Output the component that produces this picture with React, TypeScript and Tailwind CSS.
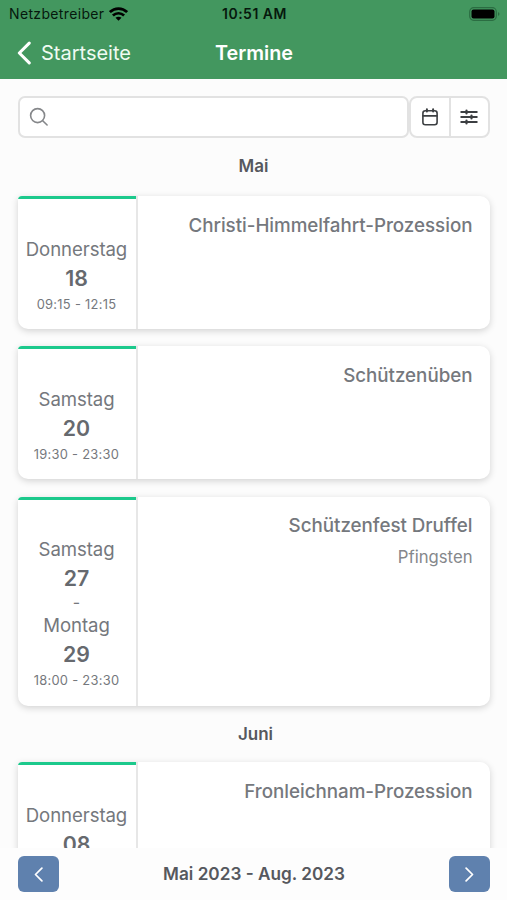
import React from 'react';

type Day = { name: string; date: string };
type Appointment = { days: Day[]; time: string; title: string; note?: string; height: string };

const mai: Appointment[] = [
  { days: [{ name: 'Donnerstag', date: '18' }], time: '09:15 - 12:15', title: 'Christi-Himmelfahrt-Prozession', height: 'h-[133px]' },
  { days: [{ name: 'Samstag', date: '20' }], time: '19:30 - 23:30', title: 'Schützenüben', height: 'h-[133px]' },
  {
    days: [
      { name: 'Samstag', date: '27' },
      { name: 'Montag', date: '29' },
    ],
    time: '18:00 - 23:30',
    title: 'Schützenfest Druffel',
    note: 'Pfingsten',
    height: 'h-[209px]',
  },
];

const juni: Appointment[] = [
  { days: [{ name: 'Donnerstag', date: '08' }], time: '09:15 - 12:15', title: 'Fronleichnam-Prozession', height: 'h-[133px]' },
];

function AppointmentCard({ item }: { item: Appointment }) {
  return (
    <article className={`flex shrink-0 overflow-hidden rounded-[10px] rounded-tl-[4px] bg-white shadow-[0_2px_7px_rgba(0,0,0,0.17)] ${item.height}`}>
      <div className="flex w-[118px] shrink-0 flex-col items-center border-t-[3px] border-[#1cc98c] pt-[36.8px] whitespace-nowrap text-[#75787d]">
        {item.days.map((day, i) => (
          <React.Fragment key={day.date}>
            {i > 0 && <span className="h-[20px] text-[16px] leading-[21px]">-</span>}
            <span className="h-[26px] text-[18.6px] leading-[26px] tracking-[-0.08px]">{day.name}</span>
            <span className="h-[30px] text-[21.3px] leading-[32px] font-semibold text-[#66696e]">{day.date}</span>
          </React.Fragment>
        ))}
        <span className="h-[22px] text-[12.9px] leading-[26px] tracking-[0.28px]">{item.time}</span>
      </div>
      <div className="flex flex-1 flex-col items-end border-l-2 border-[#e7e7e7] pt-[15.8px] pr-[17px] whitespace-nowrap">
        <h3 className="text-[18.8px] leading-[27px] font-medium tracking-[-0.03px] text-[#75787d]">{item.title}</h3>
        {item.note && <p className="mt-[5px] text-[16.7px] leading-[26px] text-[#85878b]">{item.note}</p>}
      </div>
    </article>
  );
}

function Chevron({ className, direction, weight }: { className: string; direction: 'left' | 'right'; weight: number }) {
  return (
    <svg className={className} viewBox="0 0 12 20" fill="none" stroke="currentColor" strokeWidth={weight} strokeLinecap="round" strokeLinejoin="round">
      <path d={direction === 'left' ? 'M10.5 1.5 2 10l8.5 8.5' : 'M1.5 1.5 10 10l-8.5 8.5'} />
    </svg>
  );
}

export default function App() {
  return (
    <div className="flex h-[900px] w-full flex-col overflow-hidden bg-[#fcfcfc] font-['Inter','Liberation_Sans',sans-serif]">
      <header className="flex h-[79px] shrink-0 flex-col bg-[#43975f]">
        <div className="grid h-[27px] grid-cols-3 items-center pr-[7px] pl-[9px] text-[#06180d]">
          <div className="flex items-center gap-[5px]">
            <span className="text-[14px] leading-[20px] tracking-[0.35px]">Netzbetreiber</span>
            <svg className="h-[14px] w-[19px]" viewBox="0 0 19 14" fill="none" stroke="#000" strokeWidth="2.7">
              <path d="M.9 5.1C5.8.4 13.2.4 18.1 5.1" />
              <path d="M3.9 8.5c3.2-3 8-3 11.2 0" />
              <path d="M6.5 10.8c1.8-1.5 4.2-1.5 6 0l-3 3Z" fill="#000" stroke="none" />
            </svg>
          </div>
          <span className="text-center text-[14px] leading-[20px] font-semibold tracking-[0.5px] whitespace-nowrap">10:51 AM</span>
          <svg className="h-[14px] w-[31px] justify-self-end" viewBox="0 0 31 14">
            <rect x=".7" y=".7" width="26.6" height="12.6" rx="4" fill="none" stroke="#2b6d42" strokeWidth="1.2" />
            <rect x="2.5" y="2.4" width="23" height="9.2" rx="2" fill="#000" />
            <path d="M29 5q3 2 0 4Z" fill="#2b6d42" />
          </svg>
        </div>
        <nav className="grid h-[52px] grid-cols-3 items-center px-[17px] text-white">
          <a className="flex items-center gap-[10px]">
            <Chevron className="h-[24px] w-[14px]" direction="left" weight={2.6} />
            <span className="text-[20px] leading-[28px] text-[#effbf2]">Startseite</span>
          </a>
          <h1 className="pl-[1px] text-center text-[19.8px] leading-[28px] font-semibold">Termine</h1>
        </nav>
      </header>

      <main className="flex min-h-0 flex-1 flex-col overflow-hidden px-[17.5px] pt-[17px]">
        <div className="flex h-[42px] shrink-0">
          <label className="flex flex-1 items-center rounded-[7px] border-2 border-[#e2e2e2] bg-white pl-[9px]">
            <svg className="size-[20px]" viewBox="0 0 20 20" fill="none" stroke="#85878a" strokeWidth="1.6" strokeLinecap="round">
              <circle cx="8.6" cy="8.6" r="7" />
              <path d="m13.7 13.7 4.4 4.3" />
            </svg>
            <input aria-label="Suche" className="min-w-0 flex-1 bg-transparent outline-none" />
          </label>
          <div className="flex w-[81px] rounded-[8px] border-2 border-[#e2e2e2] bg-white">
            <button aria-label="Kalender" className="flex w-[40px] items-center justify-center border-r-2 border-[#e2e2e2]">
              <svg className="h-[18px] w-[16px]" viewBox="0 0 16 18" fill="none" stroke="#3c3f42" strokeWidth="1.6" strokeLinecap="round">
                <rect x=".9" y="2.8" width="14.2" height="14" rx="2.5" />
                <path d="M1 7.9h14" />
                <path d="M4.9 1.2v2.4M11.1 1.2v2.4" strokeWidth="2" />
              </svg>
            </button>
            <button aria-label="Filter" className="flex flex-1 items-center justify-center">
              <svg className="h-[16px] w-[18px]" viewBox="0 0 18 16" fill="none" stroke="#3c3f42" strokeWidth="1.8">
                <path d="M.5 3h17M.5 8h17M.5 13h17" />
                <path d="M6.5 1.5v3M11.5 6.5v3M6.5 11.5v3" strokeWidth="2.2" strokeLinecap="round" />
              </svg>
            </button>
          </div>
        </div>

        <h2 className="h-[58px] shrink-0 text-center text-[17px] leading-[57px] font-semibold text-[#56585e]">Mai</h2>
        <section className="flex shrink-0 flex-col gap-[17.3px]">
          {mai.map((item) => (
            <AppointmentCard key={item.title} item={item} />
          ))}
        </section>
        <h2 className="h-[56.4px] shrink-0 pl-[4px] text-center text-[17px] leading-[56px] font-semibold text-[#56585e]">Juni</h2>
        <section className="flex shrink-0 flex-col">
          {juni.map((item) => (
            <AppointmentCard key={item.title} item={item} />
          ))}
        </section>
      </main>

      <footer className="flex h-[52px] shrink-0 items-center justify-between bg-[#fdfdfd] pr-[17px] pl-[18px]">
        <button aria-label="Zurück" className="flex h-[36px] w-[40.5px] items-center justify-center rounded-[6px] bg-[#5f81ae] text-white">
          <Chevron className="h-[15px] w-[9px]" direction="left" weight={2.3} />
        </button>
        <span className="text-[17.2px] leading-[24px] font-semibold text-[#56585e]">Mai 2023 - Aug. 2023</span>
        <button aria-label="Weiter" className="flex h-[36px] w-[40.5px] items-center justify-center rounded-[6px] bg-[#5f81ae] text-white">
          <Chevron className="h-[15px] w-[9px]" direction="right" weight={2.3} />
        </button>
      </footer>
    </div>
  );
}
